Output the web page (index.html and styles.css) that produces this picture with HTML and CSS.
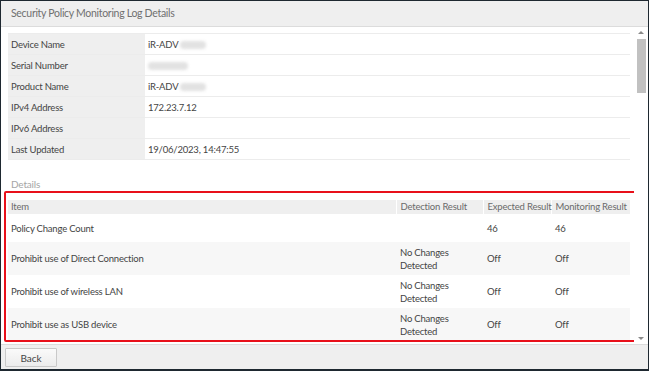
FILE: index.html
```html
<!DOCTYPE html>
<html>
<head>
<meta charset="utf-8">
<link rel="stylesheet" href="styles.css">
</head>
<body>
<div class="window">
  <header class="title-bar">Security Policy Monitoring Log Details</header>
  <div class="main">
    <div class="content">
      <table class="info">
        <tr><th>Device Name</th><td>iR-ADV <span class="blur w34"></span></td></tr>
        <tr><th>Serial Number</th><td><span class="blur w44"></span></td></tr>
        <tr><th>Product Name</th><td>iR-ADV <span class="blur w34"></span></td></tr>
        <tr><th>IPv4 Address</th><td>172.23.7.12</td></tr>
        <tr><th>IPv6 Address</th><td></td></tr>
        <tr><th>Last Updated</th><td>19/06/2023, 14:47:55</td></tr>
      </table>
      <div class="section-label">Details</div>
      <table class="details">
        <colgroup><col><col class="c-det"><col class="c-exp"><col class="c-mon"></colgroup>
        <thead>
          <tr><th class="c-item">Item</th><th>Detection Result</th><th>Expected Result</th><th>Monitoring Result</th></tr>
        </thead>
        <tbody>
          <tr class="single"><td>Policy Change Count</td><td></td><td>46</td><td>46</td></tr>
          <tr><td>Prohibit use of Direct Connection</td><td>No Changes<br>Detected</td><td>Off</td><td>Off</td></tr>
          <tr><td>Prohibit use of wireless LAN</td><td>No Changes<br>Detected</td><td>Off</td><td>Off</td></tr>
          <tr><td>Prohibit use as USB device</td><td>No Changes<br>Detected</td><td>Off</td><td>Off</td></tr>
        </tbody>
      </table>
      <div class="highlight"></div>
    </div>
    <div class="scrollbar">
      <div class="arrow up"></div>
      <div class="track"><div class="thumb"></div></div>
      <div class="arrow down"></div>
    </div>
  </div>
  <footer class="footer"><button class="btn">Back</button></footer>
</div>
</body>
</html>
```
FILE: styles.css
```css
* { box-sizing: border-box; }
html, body { margin: 0; padding: 0; background: #1e2830; }
body {
  width: 649px; height: 371px; overflow: hidden;
  font-family: "Lato", "Open Sans", sans-serif;
  font-size: 9.5px; letter-spacing: -0.2px; color: #444;
}
.window {
  margin: 1px 1px 2px 1px;
  width: 647px; height: 368px;
  background: #fff;
  display: flex; flex-direction: column;
}
.title-bar {
  height: 26px;
  background: #efefef;
  border-bottom: 1px solid #dcdcdc;
  padding: 6px 0 0 10px;
  font-size: 10.5px; letter-spacing: -0.3px; color: #707070;
}
.main { flex: 1; display: flex; min-height: 0; }
.content { flex: 1; position: relative; padding: 6px 4px 0 7px; overflow: hidden; }
.info, .details { width: 622px; border-collapse: collapse; }
.details { table-layout: fixed; }
.info tr { height: 21px; border-top: 1px solid #ececec; border-bottom: 1px solid #ececec; }
.info th {
  width: 137px; background: #efefef; text-align: left; font-weight: normal;
  padding: 0 0 0 3px; color: #444;
}
.info td { padding: 0 0 0 3px; color: #444; }
.blur {
  display: inline-block; height: 8px; vertical-align: middle;
  background: #e2e2e2; border-radius: 4px; filter: blur(1.5px);
}
.w34 { width: 26px; }
.w44 { width: 40px; }
.section-label { margin: 18px 0 0 3px; height: 22px; color: #a5a5a5; font-size: 10px; }
.details thead th {
  background: #efefef; height: 14px; text-align: left; font-weight: normal;
  color: #6a6a6a; padding: 0 0 0 4px; border-left: 1px solid #fff;
  white-space: nowrap; line-height: 14px;
}
.details thead th.c-item { border-left: none; padding-left: 3px; }
.c-det { width: 87px; }
.c-exp { width: 68px; }
.c-mon { width: 79px; }
.details td { padding: 0 0 0 4px; height: 33px; line-height: 13px; color: #444; vertical-align: middle; }
.details td:first-child { padding-left: 3px; }
.details tr.single td { height: 28px; }
.details tbody tr:nth-child(even) { background: #f7f7f7; }
.highlight {
  position: absolute; left: 3px; top: 164px; width: 634px; height: 151px;
  border: 2px solid #e8101a; border-radius: 2px; pointer-events: none;
}
.scrollbar { width: 14px; display: flex; flex-direction: column; align-items: center; background: #fff; }
.arrow { width: 0; height: 0; border-left: 3px solid transparent; border-right: 3px solid transparent; margin: 4px 0; }
.arrow.up { border-bottom: 3px solid #8a8a8a; }
.arrow.down { border-top: 3px solid #8a8a8a; }
.track { flex: 1; width: 100%; display: flex; justify-content: center; }
.thumb { width: 9px; height: 54px; margin-top: 1px; background: #c1c1c1; }
.footer {
  height: 25px; background: #efefef; border-top: 1px solid #dcdcdc;
  padding: 3px 0 0 4px;
}
.btn {
  width: 52px; height: 19px; padding: 0;
  font-family: inherit; font-size: 10px; color: #444;
  background: linear-gradient(#fafafa, #ececec);
  border: 1px solid #c9c9c9; border-radius: 1px;
}
```
